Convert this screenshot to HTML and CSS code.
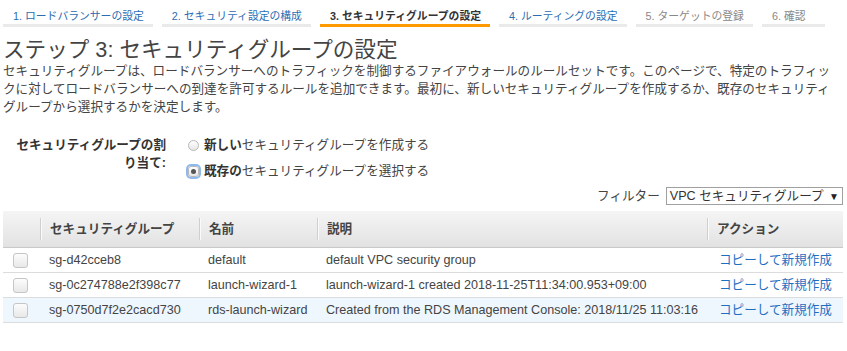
FILE: index.html
```html
<!DOCTYPE html>
<html>
  <head>
    <meta charset="utf-8" />
    <title>ステップ 3: セキュリティグループの設定</title>
    <link rel="stylesheet" href="styles.css">
  </head>
  <body>
    <ul class="steps">
      <li class="step done">1. ロードバランサーの設定</li>
      <li class="step done">2. セキュリティ設定の構成</li>
      <li class="step current">3. セキュリティグループの設定</li>
      <li class="step done">4. ルーティングの設定</li>
      <li class="step">5. ターゲットの登録</li>
      <li class="step last">6. 確認</li>
    </ul>

    <h1>ステップ 3: セキュリティグループの設定</h1>
    <p class="intro">
      セキュリティグループは、ロードバランサーへのトラフィックを制御するファイアウォールのルールセットです。このページで、特定のトラフィックに対してロードバランサーへの到達を許可するルールを追加できます。最初に、新しいセキュリティグループを作成するか、既存のセキュリティグループから選択するかを決定します。
    </p>

    <div class="assign">
      <div class="assign-label">セキュリティグループの割り当て:</div>
      <div class="assign-options">
        <div class="option"><span class="radio"></span><b>新しい</b>セキュリティグループを作成する</div>
        <div class="option"><span class="radio checked"></span><b>既存の</b>セキュリティグループを選択する</div>
      </div>
    </div>

    <div class="filter">
      <span>フィルター</span>
      <div class="select">VPC セキュリティグループ <span class="arrow">▼</span></div>
    </div>

    <table class="groups">
      <colgroup>
        <col class="c-check" />
        <col class="c-id" />
        <col class="c-name" />
        <col class="c-desc" />
        <col class="c-action" />
      </colgroup>
      <thead>
        <tr>
          <th></th>
          <th><div class="th-inner">セキュリティグループ</div></th>
          <th><div class="th-inner">名前</div></th>
          <th><div class="th-inner">説明</div></th>
          <th><div class="th-inner">アクション</div></th>
        </tr>
      </thead>
      <tbody>
        <tr>
          <td><span class="checkbox"></span></td>
          <td>sg-d42cceb8</td>
          <td>default</td>
          <td>default VPC security group</td>
          <td class="action"><a href="#">コピーして新規作成</a></td>
        </tr>
        <tr>
          <td><span class="checkbox"></span></td>
          <td>sg-0c274788e2f398c77</td>
          <td>launch-wizard-1</td>
          <td>launch-wizard-1 created 2018-11-25T11:34:00.953+09:00</td>
          <td class="action"><a href="#">コピーして新規作成</a></td>
        </tr>
        <tr class="hover">
          <td><span class="checkbox"></span></td>
          <td>sg-0750d7f2e2cacd730</td>
          <td>rds-launch-wizard</td>
          <td>Created from the RDS Management Console: 2018/11/25 11:03:16</td>
          <td class="action"><a href="#">コピーして新規作成</a></td>
        </tr>
      </tbody>
    </table>
  </body>
</html>
```

FILE: styles.css
```css
body {
  margin: 0;
  padding: 0 4px 0 3px;
  background: #fff;
  color: #444;
  font-family: "Liberation Sans", "Noto Sans CJK JP", sans-serif;
  font-size: 12.6px;
  line-height: 18px;
}

.steps {
  display: flex;
  gap: 9px;
  margin: 0;
  padding: 0;
  list-style: none;
}

.step {
  min-width: 44px;
  padding: 7px 9px 0 10px;
  height: 17px;
  line-height: 18px;
  font-size: 10.8px;
  color: #888;
  border-bottom: 3px solid #eaeaea;
}

.step.done {
  color: #2b6cb3;
}

.step.current {
  color: #333;
  font-weight: bold;
  border-bottom-color: #f90;
}

h1 {
  margin: 10px 0 0 0;
  font-size: 21.6px;
  font-weight: normal;
  line-height: 25px;
  color: #444;
}

.intro {
  width: 836px;
  margin: 0;
}

.assign {
  display: flex;
  margin-top: 20px;
}

.assign-label {
  width: 152px;
  padding-left: 11px;
  text-align: right;
  font-weight: bold;
  color: #333;
}

.assign-options {
  padding-left: 22px;
}

.option {
  display: flex;
  align-items: center;
  height: 18px;
  margin-bottom: 8px;
  color: #444;
}

.option b {
  color: #333;
}

.radio {
  width: 9px;
  height: 9px;
  margin-right: 5px;
  border: 1px solid #b8b8b8;
  border-radius: 50%;
  background: linear-gradient(#fff, #e6e6e6);
  flex-shrink: 0;
}

.radio.checked {
  position: relative;
  box-shadow: 0 0 0 2px #8db9ef;
  border-radius: 3px;
}

.radio.checked::after {
  content: "";
  position: absolute;
  left: 2px;
  top: 2px;
  width: 5px;
  height: 5px;
  border-radius: 50%;
  background: #555;
}

.filter {
  display: flex;
  justify-content: flex-end;
  align-items: center;
  gap: 6px;
  margin-top: -1px;
  height: 18px;
}

.select {
  height: 16px;
  line-height: 16px;
  padding: 0 3px;
  border: 1px solid #a0a0a0;
  color: #333;
  background: #fff;
}

.select .arrow {
  font-size: 10px;
  margin-left: 2px;
  color: #222;
}

.groups {
  width: 840px;
  margin-top: 6px;
  border-collapse: collapse;
  table-layout: fixed;
}

.c-check { width: 37px; }
.c-id { width: 159px; }
.c-name { width: 118px; }
.c-desc { width: 390px; }
.c-action { width: 136px; }

.groups th {
  height: 36px;
  padding: 0;
  text-align: left;
  font-weight: bold;
  color: #444;
  background: linear-gradient(#f5f5f5, #e2e2e2);
  border-bottom: 1px solid #c8c8c8;
}

.th-inner {
  padding: 2px 0 2px 9px;
  border-left: 1px solid #cfcfcf;
  box-shadow: inset 1px 0 0 #fafafa;
}

.groups td {
  height: 24px;
  padding: 0 0 0 9px;
  border-bottom: 1px solid #dcdcdc;
  white-space: nowrap;
  overflow: hidden;
  color: #444;
}

.groups td:first-child {
  padding-left: 10px;
}

.groups td.action {
  padding-left: 12px;
}

.groups tr.hover td {
  background: #eef6fe;
}

.checkbox {
  display: block;
  width: 13px;
  height: 13px;
  border: 1px solid #c6c6c6;
  border-radius: 3px;
  background: linear-gradient(#fcfcfc, #e8e8e8);
}

a {
  color: #1f6fc1;
  text-decoration: none;
}
```
